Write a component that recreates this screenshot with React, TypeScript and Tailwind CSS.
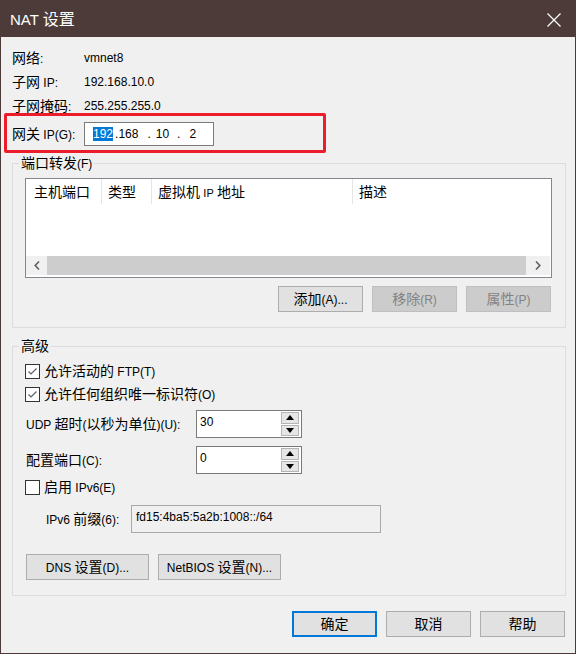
import React from "react";

const cjk = /([\u3000-\u9fff\uff00-\uffef]+)/;

// CJK runs are drawn a little larger than the Latin text, as in the dialog font
function T({ s }: { s: string }) {
  return (
    <span className="whitespace-pre">
      {s.split(cjk).map((p, i) =>
        cjk.test(p) ? (
          <span key={i} className="text-[14px]">
            {p}
          </span>
        ) : (
          <React.Fragment key={i}>{p}</React.Fragment>
        )
      )}
    </span>
  );
}

function Btn({ label, disabled, primary, w = "w-[85px]" }: { label: string; disabled?: boolean; primary?: boolean; w?: string }) {
  return (
    <div
      className={`${w} h-[26px] flex items-center justify-center ${
        disabled
          ? "bg-[#cccccc] border border-[#bfbfbf] text-[#838383]"
          : primary
          ? "bg-[#e1e1e1] border-2 border-[#0078d7] text-black"
          : "bg-[#e1e1e1] border border-[#adadad] text-black"
      }`}
    >
      <T s={label} />
    </div>
  );
}

function Check({ checked, label }: { checked: boolean; label: string }) {
  return (
    <div className="flex items-center h-[23px] ml-[12px]">
      <div className="w-[15px] h-[15px] border border-[#333333] bg-white flex items-center justify-center">
        {checked && (
          <svg width="13" height="13" viewBox="0 0 13 13">
            <polyline points="2.5,6.5 5,9 10.5,3.5" fill="none" stroke="#5f5f5f" strokeWidth="1.2" />
          </svg>
        )}
      </div>
      <span className="ml-[4px]">
        <T s={label} />
      </span>
    </div>
  );
}

function Spinner({ value }: { value: string }) {
  return (
    <div className="w-[106px] h-[28px] border border-[#7a7a7a] bg-white flex">
      <div className="flex-1 pl-[3px] pt-[3px]">{value}</div>
      <div className="w-[18px] mr-[2px] py-[1px] flex flex-col gap-[1px]">
        <div className="flex-1 bg-[#e6e6e6] border border-[#b4b4b4] flex items-center justify-center">
          <svg width="8" height="5" viewBox="0 0 8 5">
            <polygon points="0,5 8,5 4,0" fill="#000" />
          </svg>
        </div>
        <div className="flex-1 bg-[#e6e6e6] border border-[#b4b4b4] flex items-center justify-center">
          <svg width="8" height="5" viewBox="0 0 8 5">
            <polygon points="0,0 8,0 4,5" fill="#000" />
          </svg>
        </div>
      </div>
    </div>
  );
}

export default function App() {
  return (
    <div
      className="w-[576px] h-[654px] bg-[#4c3b39] flex flex-col text-[12px] leading-[16px] text-black"
      style={{ fontFamily: '"Liberation Sans", "Noto Sans CJK SC", sans-serif' }}
    >
      {/* title bar */}
      <div className="h-[37px] flex items-center justify-between pl-[10px] pr-[15px] pt-[2px] text-white text-[15px]">
        <span>
          NAT <span className="text-[16px]">设置</span>
        </span>
        <svg width="14" height="14" viewBox="0 0 14 14">
          <path d="M0.5 0.5 L13.5 13.5 M13.5 0.5 L0.5 13.5" stroke="#ffffff" strokeWidth="1.2" />
        </svg>
      </div>

      <div className="flex-1 mx-[1px] mb-[1px] bg-[#f0f0f0] relative flex flex-col pt-[9px]">
        {/* network info */}
        <div className="flex items-center h-[24px] pl-[11px]">
          <span className="w-[72px]"><T s="网络:" /></span>
          <span>vmnet8</span>
        </div>
        <div className="flex items-center h-[24px] pl-[11px]">
          <span className="w-[72px]"><T s="子网 IP:" /></span>
          <span>192.168.10.0</span>
        </div>
        <div className="flex items-center h-[24px] pl-[11px]">
          <span className="w-[72px]"><T s="子网掩码:" /></span>
          <span>255.255.255.0</span>
        </div>
        <div className="flex items-center h-[24px] pl-[11px] mt-[4px]">
          <span className="w-[72px]"><T s="网关 IP(G):" /></span>
          <div className="w-[130px] h-[24px] border border-[#7a7a7a] bg-white flex items-center pl-[8px] leading-[14px]">
            <span className="bg-[#0078d7] text-white">192</span>
            <span className="ml-[2px]">.</span>
            <span>168</span>
            <span className="ml-[9px]">.</span>
            <span className="ml-[5px]">10</span>
            <span className="ml-[8px]">.</span>
            <span className="ml-[9px]">2</span>
          </div>
        </div>
        {/* red annotation frame */}
        <div className="absolute left-[3px] top-[76px] w-[322px] h-[40px] border-[3px] border-[#ec1c2a] rounded-[2px] pointer-events-none" />

        {/* port forwarding */}
        <fieldset className="ml-[11px] w-[554px] mt-[10px] border border-[#dcdcdc] pb-[15px]">
          <legend className="ml-[6px] px-[2px] leading-[14px]">
            <T s="端口转发(F)" />
          </legend>
          <div className="ml-[12px] mt-[7px] w-[527px] h-[100px] border border-[#828790] bg-white flex flex-col">
            <div className="h-[25px] flex">
              <div className="w-[76px] pl-[8px] pt-[2px] flex items-center border-r border-[#e5e5e5]"><T s="主机端口" /></div>
              <div className="w-[50px] pl-[6px] pt-[2px] flex items-center border-r border-[#e5e5e5]"><T s="类型" /></div>
              <div className="w-[201px] pl-[6px] pt-[2px] flex items-center border-r border-[#e5e5e5]">
                <span className="whitespace-pre">
                  <span className="text-[14px]">虚拟机</span> <span className="text-[11px]">IP</span> <span className="text-[14px]">地址</span>
                </span>
              </div>
              <div className="flex-1 pl-[6px] pt-[2px] flex items-center"><T s="描述" /></div>
            </div>
            <div className="flex-1" />
            <div className="h-[19px] mb-[2px] mr-[1px] flex">
              <div className="w-[21px] bg-[#f0f0f0] flex items-center justify-center">
                <svg width="6" height="9" viewBox="0 0 6 9">
                  <polyline points="5,0.5 1.2,4.5 5,8.5" fill="none" stroke="#606060" strokeWidth="1.6" />
                </svg>
              </div>
              <div className="flex-1 bg-[#cdcdcd]" />
              <div className="w-[24px] bg-[#f0f0f0] flex items-center justify-center">
                <svg width="6" height="9" viewBox="0 0 6 9">
                  <polyline points="1,0.5 4.8,4.5 1,8.5" fill="none" stroke="#606060" strokeWidth="1.6" />
                </svg>
              </div>
            </div>
          </div>
          <div className="ml-[12px] w-[526px] mt-[8px] flex justify-end gap-[9px]">
            <Btn label="添加(A)..." />
            <Btn label="移除(R)" disabled />
            <Btn label="属性(P)" disabled />
          </div>
        </fieldset>

        {/* advanced */}
        <fieldset className="ml-[11px] w-[554px] mt-[11px] border border-[#dcdcdc] pb-[15px]">
          <legend className="ml-[6px] px-[2px] leading-[14px]">
            <T s="高级" />
          </legend>
          <div className="mt-[6px]">
            <Check checked label="允许活动的 FTP(T)" />
            <Check checked label="允许任何组织唯一标识符(O)" />
          </div>
          <div className="flex items-center h-[28px] mt-[4px] ml-[13px]">
            <span className="w-[170px]"><T s="UDP 超时(以秒为单位)(U):" /></span>
            <Spinner value="30" />
          </div>
          <div className="flex items-center h-[28px] mt-[8px] ml-[13px]">
            <span className="w-[170px]"><T s="配置端口(C):" /></span>
            <Spinner value="0" />
          </div>
          <div className="mt-[2px]">
            <Check checked={false} label="启用 IPv6(E)" />
          </div>
          <div className="flex items-center h-[28px] mt-[6px] ml-[33px]">
            <span className="w-[85px]"><T s="IPv6 前缀(6):" /></span>
            <div className="w-[250px] h-[28px] border border-[#a8a8a8] bg-[#f0f0f0] pl-[4px] pt-[3px]">
              fd15:4ba5:5a2b:1008::/64
            </div>
          </div>
          <div className="flex gap-[9px] mt-[21px] ml-[13px]">
            <Btn label="DNS 设置(D)..." w="w-[123px]" />
            <Btn label="NetBIOS 设置(N)..." w="w-[123px]" />
          </div>
        </fieldset>

        {/* dialog buttons */}
        <div className="flex justify-end gap-[9px] mt-[15px] mr-[10px]">
          <Btn label="确定" primary />
          <Btn label="取消" />
          <Btn label="帮助" />
        </div>
      </div>
    </div>
  );
}
